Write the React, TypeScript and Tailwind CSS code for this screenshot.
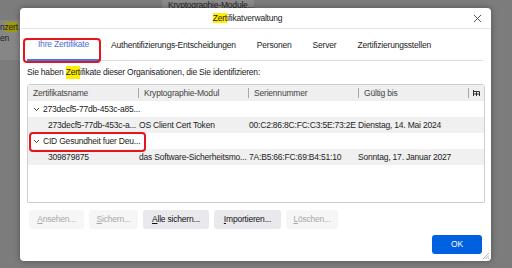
import React from "react"

const FONT = { fontFamily: '"Liberation Sans", "Noto Sans", sans-serif', letterSpacing: "-0.2px" }

const TABS = [
  "Ihre Zertifikate",
  "Authentifizierungs-Entscheidungen",
  "Personen",
  "Server",
  "Zertifizierungsstellen",
]

const COLS = ["Zertifikatsname", "Kryptographie-Modul", "Seriennummer", "Gültig bis"]

const ROWS = [
  { group: true, name: "273decf5-77db-453c-a85..." },
  {
    name: "273decf5-77db-453c-a...",
    modul: "OS Client Cert Token",
    serial: "00:C2:86:8C:FC:C3:5E:73:2E",
    valid: "Dienstag, 14. Mai 2024",
  },
  { group: true, name: "CID Gesundheit fuer Deu..." },
  {
    name: "309879875",
    modul: "das Software-Sicherheitsmo...",
    serial: "7A:B5:66:FC:69:B4:51:10",
    valid: "Sonntag, 17. Januar 2027",
  },
]

const BUTTONS = [
  { key: "A", rest: "nsehen...", enabled: false, w: "w-[55px]" },
  { key: "S", rest: "ichern...", enabled: false, w: "w-[49px]" },
  { key: "A", rest: "lle sichern...", enabled: true, w: "w-[66px]" },
  { key: "I", rest: "mportieren...", enabled: true, w: "w-[67px]" },
  { key: "L", rest: "öschen...", enabled: false, w: "w-[52px]" },
]

function Chevron() {
  return (
    <svg width="7" height="5" viewBox="0 0 7 5" className="mr-[3px] shrink-0">
      <path d="M1 1 L3.5 3.5 L6 1" fill="none" stroke="#333" strokeWidth="0.9" />
    </svg>
  )
}

export default function App() {
  return (
    <div className="relative w-[512px] h-[268px] overflow-hidden bg-[#7c7c7c] text-[8.5px] text-[#1c1c1c]" style={FONT}>
      {/* stuff behind the dialog */}
      <div className="absolute left-[162px] top-0 w-[92px] h-[12px] bg-[#8a8a8a] text-[#222] pl-[6px] leading-[10px] whitespace-nowrap">
        Kryptographie-Module...
      </div>
      <div className="absolute left-0 top-[20px] w-[20px] h-[40px] bg-[#868686]" />
      <div className="absolute left-0 top-[21px] text-[#222] leading-[12px] whitespace-nowrap">
        n<span className="bg-[#a09a10]">zert</span>
      </div>
      <div className="absolute left-0 top-[32px] text-[#222] leading-[12px]">en</div>

      {/* dialog */}
      <div className="absolute left-[20px] top-[8px] w-[471px] h-[253px] bg-white rounded-[4px] shadow-[0_0_6px_rgba(0,0,0,0.35)] flex flex-col">
        <div className="relative h-[21px] border-b border-[#e6e6e6] flex items-center justify-center shrink-0">
          <span className="-ml-[16px] whitespace-nowrap">
            <span className="bg-[#ffee00]">Zert</span>ifikatverwaltung
          </span>
          <svg className="absolute right-[9px] top-[6px]" width="9" height="9" viewBox="0 0 9 9">
            <path d="M1 1 L8 8 M8 1 L1 8" stroke="#444" strokeWidth="0.9" />
          </svg>
        </div>

        <div className="pl-[7px] pr-[8px] flex flex-col flex-1">
          <div className="flex h-[32px] border-b border-[#dcdcdc] whitespace-nowrap">
            {TABS.map((t, i) => (
              <div
                key={t}
                className={`flex items-end shrink-0 pb-[8px] ${i === 0 ? "w-[73px] justify-center text-[#4a6fd8] border-b-2 border-[#3d7ae8] -mb-px" : "px-[10px] ml-[1px]"}`}
              >
                {t}
              </div>
            ))}
          </div>

          <div className="h-[23px] flex items-center whitespace-nowrap">
            Sie haben&nbsp;<span className="bg-[#ffee00]">Zert</span>ifikate dieser Organisationen, die Sie identifizieren:
          </div>

          <div className="h-[119px] border border-[#cfcfcf] rounded-t-[3px] flex flex-col mr-[-2px]">
            <div className="flex h-[16px] bg-[#efefef] items-center text-[#444] shrink-0 whitespace-nowrap">
              {COLS.map((c, i) => (
                <div key={c} className={`w-[110px] flex items-center pl-[5px] h-[10px] ${i > 0 ? "border-l border-[#a8a8a8]" : ""}`}>
                  {c}
                </div>
              ))}
              <div className="flex-1 h-[10px] border-l border-[#a8a8a8] flex items-center justify-center">
                <svg width="7" height="6" viewBox="0 0 7 6">
                  <path d="M0.5 0 V6 M0.5 1.5 H6.5 M3.5 1.5 V6 M6.5 1.5 V6 M0.5 4 H6.5" stroke="#333" strokeWidth="1" fill="none" />
                </svg>
              </div>
            </div>
            {ROWS.map((r, i) => (
              <div key={i} className={`flex h-[16px] items-center whitespace-nowrap ${i % 2 === 1 ? "bg-[#f0f0f0]" : ""}`}>
                {r.group ? (
                  <div className="flex items-center pl-[5px]">
                    <Chevron />
                    {r.name}
                  </div>
                ) : (
                  <>
                    <div className="w-[110px] pl-[20px] overflow-hidden">{r.name}</div>
                    <div className="w-[110px] pl-[1px] overflow-hidden">{r.modul}</div>
                    <div className="w-[110px] pl-[1px] overflow-hidden">{r.serial}</div>
                    <div className="w-[110px] overflow-hidden">{r.valid}</div>
                  </>
                )}
              </div>
            ))}
          </div>

          <div className="flex gap-[5px] mt-[7px] pl-[2px] whitespace-nowrap">
            {BUTTONS.map((b, i) => (
              <div
                key={i}
                className={`${b.w} h-[19px] rounded-[3px] flex items-center justify-center ${b.enabled ? "bg-[#e9e9ed] text-[#111]" : "bg-[#f6f6f6] text-[#a8a8a8]"}`}
              >
                <span>
                  <span className="underline underline-offset-1">{b.key}</span>
                  {b.rest}
                </span>
              </div>
            ))}
          </div>

          <div className="flex justify-end mt-[6px]">
            <div className="w-[50px] h-[19px] rounded-[3px] bg-[#0061e0] text-white flex items-center justify-center mr-[1px]">
              OK
            </div>
          </div>
        </div>

        {/* resize grip */}
        <svg className="absolute right-[1px] bottom-[1px]" width="8" height="8" viewBox="0 0 8 8">
          <path d="M7 1 L1 7 M7 3.5 L3.5 7 M7 6 L6 7" stroke="#9a9a9a" strokeWidth="0.8" />
        </svg>
      </div>

      {/* red annotation frames */}
      <div className="absolute left-[23px] top-[38px] w-[78px] h-[25px] border-2 border-[#e8141c] rounded-[4px]" />
      <div className="absolute left-[29px] top-[132px] w-[117px] h-[20px] border-2 border-[#e8141c] rounded-[4px]" />
    </div>
  )
}
